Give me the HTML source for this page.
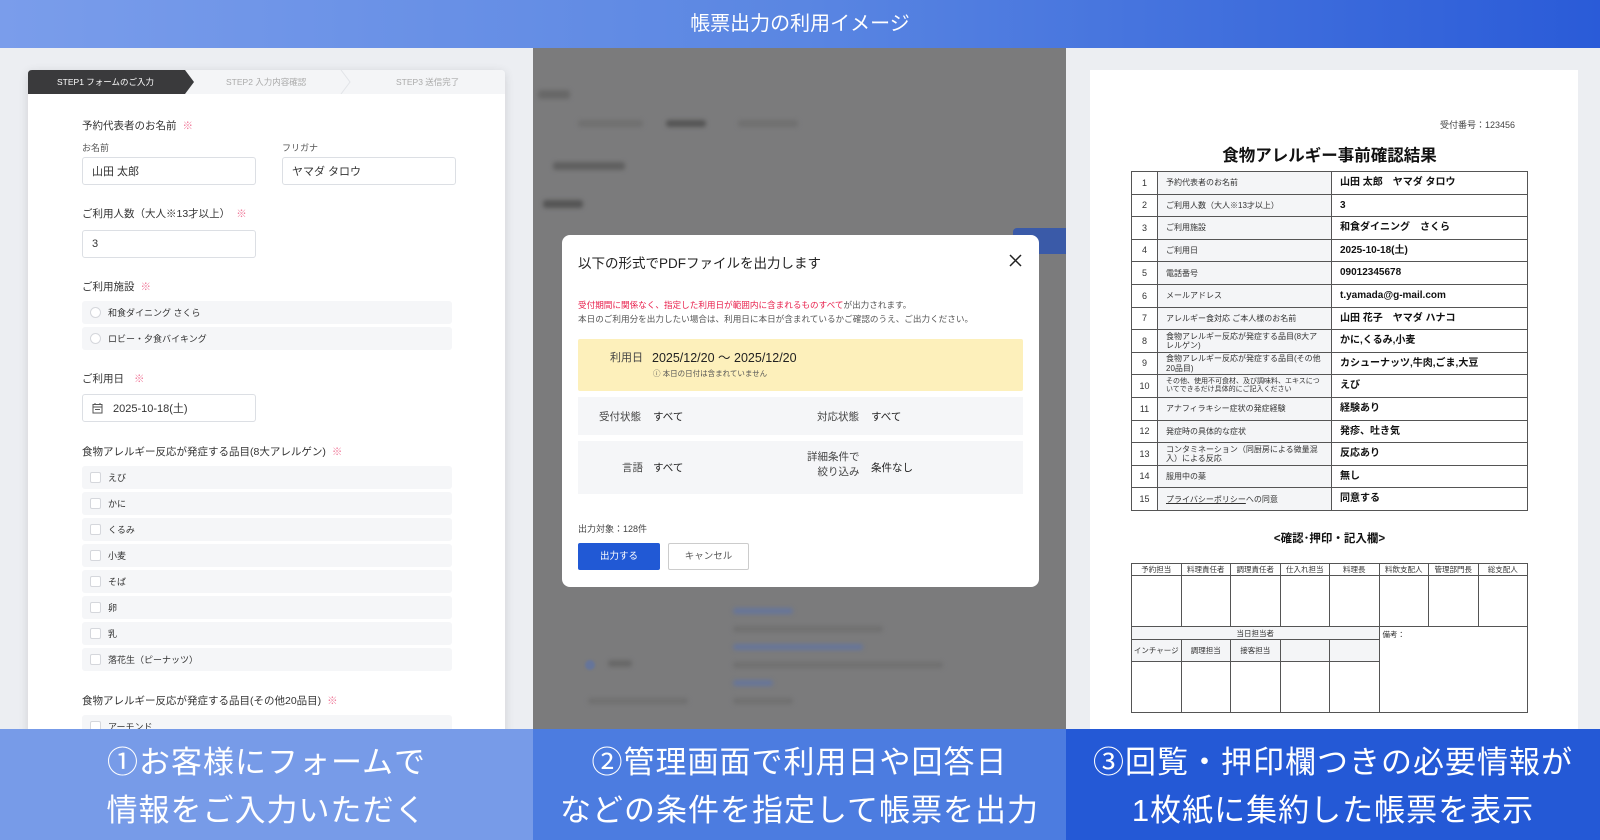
<!DOCTYPE html>
<html><head><meta charset="utf-8"><style>
*{margin:0;padding:0;box-sizing:border-box}
body{width:1600px;height:840px;overflow:hidden;position:relative;font-family:"Liberation Sans","Noto Sans CJK JP",sans-serif;color:#333;background:#eceef2}
.a{position:absolute}
.hdr{left:0;top:0;width:1600px;height:48px;background:linear-gradient(90deg,#7a9deb,#5a86e2 50%,#2a5bd8);color:#fff;font-size:20px;text-align:center;line-height:48px}
.lbl{font-size:10.5px;color:#333}
.req{color:#f07a9a;margin-left:6px}
.sub{font-size:9px;color:#555}
.inp{background:#fff;border:1px solid #dcdfe4;border-radius:3px;font-size:11px;padding-left:9px;display:flex;align-items:center}
.opt{left:82px;width:370px;height:23px;background:#f5f6f8;border-radius:3px;font-size:9px;display:flex;align-items:center;padding-left:26px;color:#333}
.cb{position:absolute;left:8px;top:6px;width:11px;height:11px;border:1px solid #d5d7dc;border-radius:2px;background:#fff}
.rd{position:absolute;left:8px;top:6px;width:11px;height:11px;border:1px solid #d5d7dc;border-radius:50%;background:#fff}
.band{top:729px;height:111px;color:#fff;font-size:31px;line-height:48px;text-align:center;padding-top:10px;letter-spacing:1px}
table{border-collapse:collapse}
.t td{border:1.2px solid #555;height:22.6px;font-size:8px;color:#333;padding:0 8px;line-height:1.15}
.t td.n{text-align:center;width:26px;padding:0;font-size:9px}
.t td.k{background:#f4f5f7;width:174px}
.t td.v{font-weight:bold;font-size:10px;color:#111}
.s td{border:1.2px solid #555;font-size:7.5px;text-align:center;color:#333;padding:0}
.blur{background:#686868;filter:blur(2px);border-radius:3px}
</style></head><body>
<div class="a hdr">帳票出力の利用イメージ</div>

<!-- LEFT -->
<div class="a" style="left:0;top:48px;width:533px;height:681px;background:#eceef2"></div>
<div class="a" style="left:28px;top:70px;width:477px;height:680px;background:#fff;border-radius:4px;box-shadow:0 2px 10px rgba(0,0,0,.12)"></div>
<div class="a" style="left:28px;top:70px;width:477px;height:24px;background:#f4f5f7;border-radius:4px 4px 0 0"></div>
<svg class="a" style="left:28px;top:70px" width="477" height="24"><path d="M0 4Q0 0 4 0H157L166 12L157 24H0Z" fill="#3a3a3c"/><path d="M313 0L322 12L313 24" stroke="#e2e4e8" fill="none"/></svg>
<div class="a" style="left:57px;top:70px;line-height:24px;font-size:8.5px;color:#fff">STEP1 フォームのご入力</div>
<div class="a" style="left:226px;top:70px;line-height:24px;font-size:8.5px;color:#aaa">STEP2 入力内容確認</div>
<div class="a" style="left:396px;top:70px;line-height:24px;font-size:8.5px;color:#aaa">STEP3 送信完了</div>

<div class="a lbl" style="left:82px;top:118px">予約代表者のお名前<span class="req">※</span></div>
<div class="a sub" style="left:82px;top:141px">お名前</div>
<div class="a sub" style="left:282px;top:141px">フリガナ</div>
<div class="a inp" style="left:82px;top:157px;width:174px;height:28px">山田 太郎</div>
<div class="a inp" style="left:282px;top:157px;width:174px;height:28px">ヤマダ タロウ</div>
<div class="a lbl" style="left:82px;top:206px">ご利用人数（大人※13才以上）<span class="req">※</span></div>
<div class="a inp" style="left:82px;top:230px;width:174px;height:28px">3</div>
<div class="a lbl" style="left:82px;top:279px">ご利用施設<span class="req">※</span></div>
<div class="a opt" style="top:301px"><span class="rd"></span>和食ダイニング さくら</div>
<div class="a opt" style="top:327px"><span class="rd"></span>ロビー・夕食バイキング</div>
<div class="a lbl" style="left:82px;top:371px">ご利用日<span class="req" style="margin-left:10px">※</span></div>
<div class="a inp" style="left:82px;top:394px;width:174px;height:28px;padding-left:30px">2025-10-18(土)
<svg class="a" style="left:9px;top:8px" width="11" height="11"><rect x="1" y="1.5" width="9" height="8.5" fill="none" stroke="#555"/><path d="M1 4H10M3 0V2M8 0V2M3 6.5H8" stroke="#555"/></svg></div>
<div class="a lbl" style="left:82px;top:444px">食物アレルギー反応が発症する品目(8大アレルゲン)<span class="req">※</span></div>
<div class="a opt" style="top:466px"><span class="cb"></span>えび</div>
<div class="a opt" style="top:492px"><span class="cb"></span>かに</div>
<div class="a opt" style="top:518px"><span class="cb"></span>くるみ</div>
<div class="a opt" style="top:544px"><span class="cb"></span>小麦</div>
<div class="a opt" style="top:570px"><span class="cb"></span>そば</div>
<div class="a opt" style="top:596px"><span class="cb"></span>卵</div>
<div class="a opt" style="top:622px"><span class="cb"></span>乳</div>
<div class="a opt" style="top:648px"><span class="cb"></span>落花生（ピーナッツ）</div>
<div class="a lbl" style="left:82px;top:693px">食物アレルギー反応が発症する品目(その他20品目)<span class="req">※</span></div>
<div class="a opt" style="top:715px"><span class="cb"></span>アーモンド</div>

<!-- MIDDLE -->
<div class="a" style="left:533px;top:48px;width:533px;height:681px;background:#7b7b7c;overflow:hidden">
<div class="a blur" style="left:5px;top:42px;width:32px;height:9px"></div>
<div class="a blur" style="left:45px;top:72px;width:65px;height:7px;background:#707070"></div>
<div class="a blur" style="left:133px;top:72px;width:40px;height:7px;background:#555"></div>
<div class="a blur" style="left:205px;top:72px;width:60px;height:7px;background:#707070"></div>
<div class="a blur" style="left:20px;top:114px;width:72px;height:8px;background:#606060"></div>
<div class="a blur" style="left:10px;top:152px;width:40px;height:8px;background:#555"></div>
<div class="a" style="left:480px;top:180px;width:60px;height:26px;background:#3a5aa8;border-radius:4px"></div>
<div class="a blur" style="left:200px;top:560px;width:60px;height:6px;background:#66759a"></div>
<div class="a blur" style="left:200px;top:578px;width:150px;height:6px;background:#707070"></div>
<div class="a blur" style="left:200px;top:596px;width:130px;height:6px;background:#66759a"></div>
<div class="a blur" style="left:200px;top:614px;width:210px;height:6px;background:#707070"></div>
<div class="a" style="left:52px;top:612px;width:10px;height:10px;border-radius:50%;background:#66759a;filter:blur(1px)"></div>
<div class="a blur" style="left:75px;top:612px;width:24px;height:7px"></div>
<div class="a blur" style="left:200px;top:632px;width:40px;height:6px;background:#66759a"></div>
<div class="a blur" style="left:55px;top:650px;width:100px;height:6px;background:#707070"></div>
<div class="a blur" style="left:200px;top:650px;width:60px;height:6px;background:#707070"></div>
</div>
<div class="a" style="left:562px;top:235px;width:477px;height:352px;background:#fff;border-radius:8px"></div>
<div class="a" style="left:578px;top:252px;font-size:13.5px;color:#222">以下の形式でPDFファイルを出力します</div>
<svg class="a" style="left:1009px;top:254px" width="13" height="13"><path d="M1 1L12 12M12 1L1 12" stroke="#222" stroke-width="1.5"/></svg>
<div class="a" style="left:578px;top:298px;font-size:8.6px;color:#555;line-height:14px"><span style="color:#e8214d">受付期間に関係なく、指定した利用日が範囲内に含まれるものすべて</span>が出力されます。<br>本日のご利用分を出力したい場合は、利用日に本日が含まれているかご確認のうえ、ご出力ください。</div>
<div class="a" style="left:578px;top:339px;width:445px;height:52px;background:#fdf0bb;border-radius:2px"></div>
<div class="a" style="left:610px;top:349px;font-size:11px;color:#444">利用日</div>
<div class="a" style="left:652px;top:347px;font-size:12.5px;color:#222">2025/12/20 ～ 2025/12/20</div>
<div class="a" style="left:653px;top:368px;font-size:7.5px;color:#555">ⓘ 本日の日付は含まれていません</div>
<div class="a" style="left:578px;top:397px;width:445px;height:38px;background:#f5f6f8"></div>
<div class="a" style="left:578px;top:441px;width:445px;height:53px;background:#f5f6f8"></div>
<div class="a" style="left:599px;top:409px;font-size:10.5px;color:#444">受付状態</div>
<div class="a" style="left:653px;top:409px;font-size:10.5px;color:#222">すべて</div>
<div class="a" style="left:817px;top:409px;font-size:10.5px;color:#444">対応状態</div>
<div class="a" style="left:871px;top:409px;font-size:10.5px;color:#222">すべて</div>
<div class="a" style="left:622px;top:460px;font-size:10.5px;color:#444">言語</div>
<div class="a" style="left:653px;top:460px;font-size:10.5px;color:#222">すべて</div>
<div class="a" style="left:807px;top:450px;font-size:10.5px;color:#444;text-align:right;line-height:15px">詳細条件で<br>絞り込み</div>
<div class="a" style="left:871px;top:460px;font-size:10.5px;color:#222">条件なし</div>
<div class="a" style="left:578px;top:522px;font-size:9px;color:#444">出力対象：128件</div>
<div class="a" style="left:578px;top:543px;width:82px;height:27px;background:#2159d5;border-radius:2px;color:#fff;font-size:9.5px;text-align:center;line-height:27px">出力する</div>
<div class="a" style="left:668px;top:543px;width:81px;height:27px;border:1px solid #ccc;border-radius:2px;color:#555;font-size:9.5px;text-align:center;line-height:25px">キャンセル</div>

<!-- RIGHT -->
<div class="a" style="left:1066px;top:48px;width:534px;height:681px;background:#eceef2"></div>
<div class="a" style="left:1090px;top:70px;width:488px;height:659px;background:#fff"></div>
<div class="a" style="left:1440px;top:118px;font-size:9px;color:#444">受付番号：123456</div>
<div class="a" style="left:1131px;top:142px;width:397px;text-align:center;font-size:16.5px;font-weight:bold;color:#111">食物アレルギー事前確認結果</div>
<table class="a t" style="left:1131px;top:171px;width:397px">
<tr><td class="n">1</td><td class="k">予約代表者のお名前</td><td class="v">山田 太郎　ヤマダ タロウ</td></tr>
<tr><td class="n">2</td><td class="k">ご利用人数（大人※13才以上）</td><td class="v">3</td></tr>
<tr><td class="n">3</td><td class="k">ご利用施設</td><td class="v">和食ダイニング　さくら</td></tr>
<tr><td class="n">4</td><td class="k">ご利用日</td><td class="v">2025-10-18(土)</td></tr>
<tr><td class="n">5</td><td class="k">電話番号</td><td class="v">09012345678</td></tr>
<tr><td class="n">6</td><td class="k">メールアドレス</td><td class="v">t.yamada@g-mail.com</td></tr>
<tr><td class="n">7</td><td class="k">アレルギー食対応 ご本人様のお名前</td><td class="v">山田 花子　ヤマダ ハナコ</td></tr>
<tr><td class="n">8</td><td class="k">食物アレルギー反応が発症する品目(8大アレルゲン)</td><td class="v">かに,くるみ,小麦</td></tr>
<tr><td class="n">9</td><td class="k">食物アレルギー反応が発症する品目(その他20品目)</td><td class="v">カシューナッツ,牛肉,ごま,大豆</td></tr>
<tr><td class="n">10</td><td class="k" style="font-size:7px">その他、使用不可食材、及び調味料、エキスについてできるだけ具体的にご記入ください</td><td class="v">えび</td></tr>
<tr><td class="n">11</td><td class="k">アナフィラキシー症状の発症経験</td><td class="v">経験あり</td></tr>
<tr><td class="n">12</td><td class="k">発症時の具体的な症状</td><td class="v">発疹、吐き気</td></tr>
<tr><td class="n">13</td><td class="k">コンタミネーション（同厨房による微量混入）による反応</td><td class="v">反応あり</td></tr>
<tr><td class="n">14</td><td class="k">服用中の薬</td><td class="v">無し</td></tr>
<tr><td class="n">15</td><td class="k"><u>プライバシーポリシー</u>への同意</td><td class="v">同意する</td></tr>
</table>
<div class="a" style="left:1131px;top:530px;width:397px;text-align:center;font-size:11.5px;font-weight:bold;color:#111">&lt;確認･押印・記入欄&gt;</div>
<table class="a s" style="left:1131px;top:563px;width:397px;table-layout:fixed">
<tr style="height:12px"><td>予約担当</td><td>料理責任者</td><td>調理責任者</td><td>仕入れ担当</td><td>料理長</td><td>料飲支配人</td><td>管理部門長</td><td>総支配人</td></tr>
<tr style="height:51px"><td></td><td></td><td></td><td></td><td></td><td></td><td></td><td></td></tr>
<tr style="height:13px"><td colspan="5" style="background:#f4f5f7">当日担当者</td><td colspan="3" rowspan="4" style="text-align:left;vertical-align:top;padding:2px 3px">備考：</td></tr>
<tr style="height:22px;background:#f4f5f7"><td>インチャージ</td><td>調理担当</td><td>接客担当</td><td></td><td></td></tr>
<tr style="height:51px"><td></td><td></td><td></td><td></td><td></td></tr>
</table>

<!-- BANDS -->
<div class="a band" style="left:0;width:533px;background:#779be8">①お客様にフォームで<br>情報をご入力いただく</div>
<div class="a band" style="left:533px;width:533px;background:#4c7ce0">②管理画面で利用日や回答日<br>などの条件を指定して帳票を出力</div>
<div class="a band" style="left:1066px;width:534px;background:#2459d6">③回覧・押印欄つきの必要情報が<br>1枚紙に集約した帳票を表示</div>
</body></html>
